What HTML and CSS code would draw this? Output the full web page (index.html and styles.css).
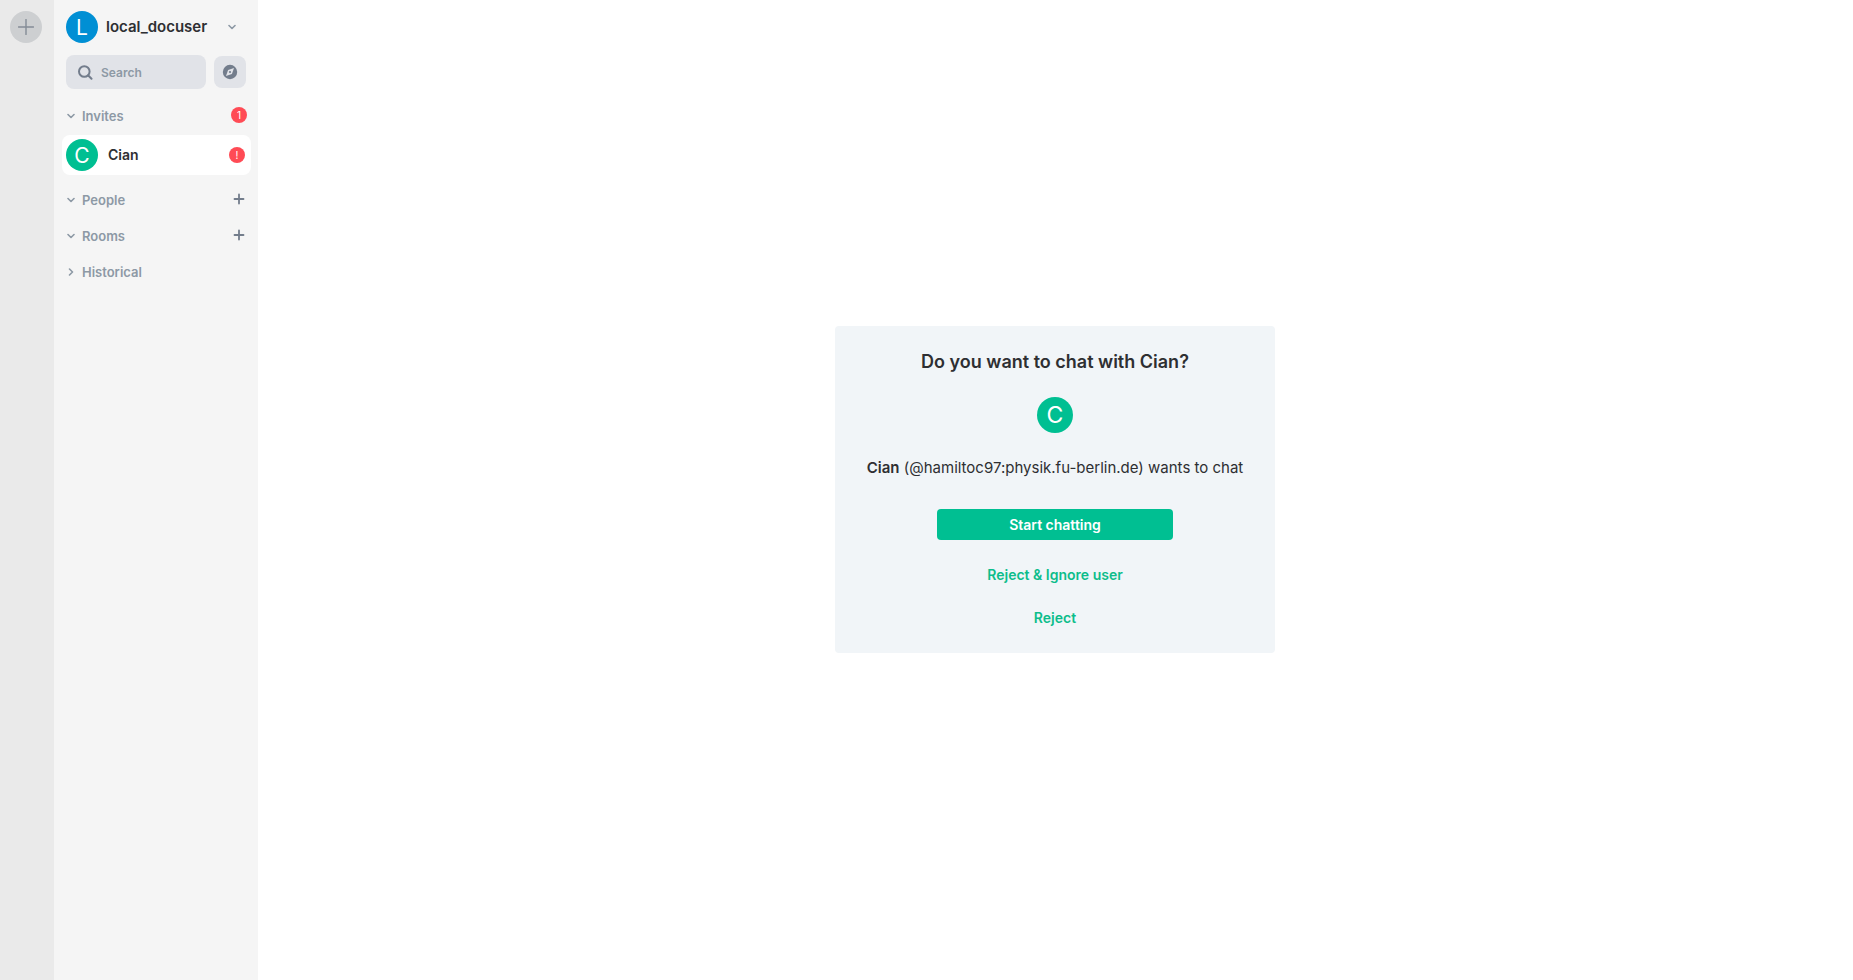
FILE: index.html
```html
<!DOCTYPE html>
<html lang="en">
<head>
  <meta charset="UTF-8">
  <meta name="viewport" content="width=device-width, initial-scale=1.0">
  <title>Cian</title>
  <link rel="stylesheet" href="styles.css">
</head>
<body>
  <div class="app">
    <nav class="spaces" aria-label="Spaces">
      <button class="spaceCreate" aria-label="Create a space">
        <svg width="16" height="16" viewBox="0 0 16 16"><path d="M8 .5v15M.5 8h15"/></svg>
      </button>
    </nav>
    <aside class="leftPanel">
      <button class="userMenu">
        <span class="avatar avatar_user">L</span>
        <span class="userName">local_docuser</span>
        <svg class="chevron" width="8" height="8" viewBox="0 0 8 8"><path d="M1 2.5l3 3 3-3"/></svg>
      </button>
      <div class="filter">
        <label class="search">
          <svg width="16" height="16" viewBox="0 0 16 16"><circle cx="7.3" cy="7.5" r="5.3"/><path d="M11.3 11.5l3.2 3.2"/></svg>
          <input type="text" placeholder="Search" aria-label="Search">
        </label>
        <button class="explore" aria-label="Explore rooms">
          <svg width="16" height="16" viewBox="0 0 16 16">
            <circle cx="8" cy="8" r="7.2" fill="#737d8c"/>
            <path d="M12 4L9.9 9.9 4 12l2.1-5.9z" fill="#e1e3e8"/>
            <circle cx="8" cy="8" r="1.1" fill="#737d8c"/>
          </svg>
        </button>
      </div>
      <section class="sublist">
        <div class="sublistHeader">
          <button class="sublistToggle">
            <svg class="chevron" width="8" height="8" viewBox="0 0 8 8"><path d="M1 2.5l3 3 3-3"/></svg>
            Invites
          </button>
          <span class="badge">1</span>
        </div>
        <a href="#" class="roomTile">
          <span class="avatar">C</span>
          <span class="roomName">Cian</span>
          <span class="badge">!</span>
        </a>
      </section>
      <section class="sublist">
        <div class="sublistHeader">
          <button class="sublistToggle">
            <svg class="chevron" width="8" height="8" viewBox="0 0 8 8"><path d="M1 2.5l3 3 3-3"/></svg>
            People
          </button>
          <button class="add" aria-label="Start chat">
            <svg width="16" height="16" viewBox="0 0 16 16"><path d="M8 3.5v9M3.5 8h9"/></svg>
          </button>
        </div>
      </section>
      <section class="sublist">
        <div class="sublistHeader">
          <button class="sublistToggle">
            <svg class="chevron" width="8" height="8" viewBox="0 0 8 8"><path d="M1 2.5l3 3 3-3"/></svg>
            Rooms
          </button>
          <button class="add" aria-label="Add room">
            <svg width="16" height="16" viewBox="0 0 16 16"><path d="M8 3.5v9M3.5 8h9"/></svg>
          </button>
        </div>
      </section>
      <section class="sublist">
        <div class="sublistHeader">
          <button class="sublistToggle">
            <svg class="chevron" width="8" height="8" viewBox="0 0 8 8"><path d="M2.5 1l3 3-3 3"/></svg>
            Historical
          </button>
        </div>
      </section>
    </aside>
    <main class="roomView">
      <div class="preview">
        <h1>Do you want to chat with Cian?</h1>
        <span class="avatar avatar_large">C</span>
        <p><strong>Cian</strong> (@hamiltoc97:physik.fu-berlin.de) wants to chat</p>
        <div class="actions">
          <button class="button button_primary">Start chatting</button>
          <button class="button">Reject &amp; Ignore user</button>
          <button class="button">Reject</button>
        </div>
      </div>
    </main>
  </div>
</body>
</html>
```
FILE: styles.css
```css
* {
  margin: 0;
  padding: 0;
  box-sizing: border-box;
}
body {
  font-family: Inter, "Liberation Sans", sans-serif;
  font-size: 15px;
  color: #2e2f32;
  background-color: #fff;
}
button, input {
  font: inherit;
  color: inherit;
  border: none;
  background: none;
}
button {
  cursor: pointer;
}
svg {
  display: block;
  flex-shrink: 0;
  fill: none;
}
.app {
  display: flex;
  min-height: 100vh;
}
.spaces {
  flex-shrink: 0;
  padding: 11px 12px 0 10px;
  background-color: #eaeaea;
}
.spaceCreate {
  display: flex;
  align-items: center;
  justify-content: center;
  width: 32px;
  height: 32px;
  border-radius: 50%;
  background-color: #cdcfd1;
}
.spaceCreate svg {
  stroke: #848c96;
  stroke-width: 1.4;
  stroke-linecap: round;
}
.leftPanel {
  flex-shrink: 0;
  width: 204px;
  padding: 11px 7px 0 8px;
  background-color: #f5f5f5;
}
.avatar {
  display: flex;
  align-items: center;
  justify-content: center;
  flex-shrink: 0;
  width: 32px;
  height: 32px;
  border-radius: 50%;
  background-color: #00bf92;
  color: #fff;
  font-size: 21px;
  font-weight: 400;
}
.avatar_user {
  background-color: #008fd4;
}
.avatar_large {
  width: 36px;
  height: 36px;
  font-size: 23px;
}
.chevron {
  stroke: #8d99a5;
  stroke-width: 1.6;
  stroke-linecap: round;
  stroke-linejoin: round;
}
.userMenu {
  display: flex;
  align-items: center;
  width: 100%;
  padding: 0 15px 0 4px;
  gap: 8px;
  font-weight: 600;
}
.userName {
  flex: 1;
  padding-bottom: 1px;
  text-align: left;
}
.filter {
  display: flex;
  align-items: center;
  gap: 8px;
  margin-top: 12px;
  padding: 0 5px 0 4px;
}
.search {
  display: flex;
  align-items: center;
  flex: 1;
  gap: 8px;
  min-width: 0;
  height: 34px;
  padding: 0 11px;
  border-radius: 8px;
  background-color: #e1e3e8;
}
.search svg {
  stroke: #737d8c;
  stroke-width: 2;
  stroke-linecap: round;
}
.search input {
  width: 100%;
  min-width: 0;
  font-size: 12px;
  font-weight: 600;
  outline: none;
}
.search input::placeholder {
  color: #8d99a5;
}
.explore {
  display: flex;
  align-items: center;
  justify-content: center;
  width: 32px;
  height: 32px;
  border-radius: 8px;
  background-color: #e1e3e8;
}
.sublist {
  margin-top: 12px;
}
.sublistHeader {
  display: flex;
  align-items: center;
  justify-content: space-between;
  height: 24px;
  padding: 0 4px 0 5px;
}
.filter + .sublist {
  margin-top: 14px;
}
.sublistToggle {
  display: flex;
  align-items: center;
  gap: 7px;
  padding-top: 2px;
  font-size: 13px;
  font-weight: 600;
  color: #8d99a5;
}
.badge {
  width: 16px;
  height: 16px;
  border-radius: 8px;
  background-color: #ff4b55;
  color: #fff;
  font-size: 10px;
  line-height: 16px;
  text-align: center;
}
.add svg {
  stroke: #737d8c;
  stroke-width: 1.8;
  stroke-linecap: round;
}
.roomTile {
  display: flex;
  align-items: center;
  gap: 10px;
  height: 40px;
  margin-top: 8px;
  padding: 0 6px 0 4px;
  border-radius: 8px;
  background-color: #fff;
  color: inherit;
  text-decoration: none;
}
.roomName {
  flex: 1;
  padding-bottom: 2px;
  font-size: 14px;
  font-weight: 600;
}
.roomView {
  display: flex;
  align-items: center;
  justify-content: center;
  flex: 1;
  padding: 0 1px 1px 0;
}
.preview {
  display: flex;
  flex-direction: column;
  align-items: center;
  width: 440px;
  padding: 20px;
  border-radius: 4px;
  background-color: #f1f5f8;
  text-align: center;
}
.preview h1 {
  margin-bottom: 19px;
  font-size: 18px;
  line-height: 32px;
  font-weight: 600;
}
.preview p {
  margin: 23px 0 29px;
  line-height: 24px;
}
.preview strong {
  font-weight: 600;
}
.actions {
  display: flex;
  flex-direction: column;
  gap: 12px;
  width: 236px;
}
.button {
  height: 31px;
  border-radius: 4px;
  color: #0dbd8b;
  font-size: 14px;
  font-weight: 600;
}
.button_primary {
  margin-bottom: 7px;
  background-color: #00bf92;
  color: #fff;
}
```
